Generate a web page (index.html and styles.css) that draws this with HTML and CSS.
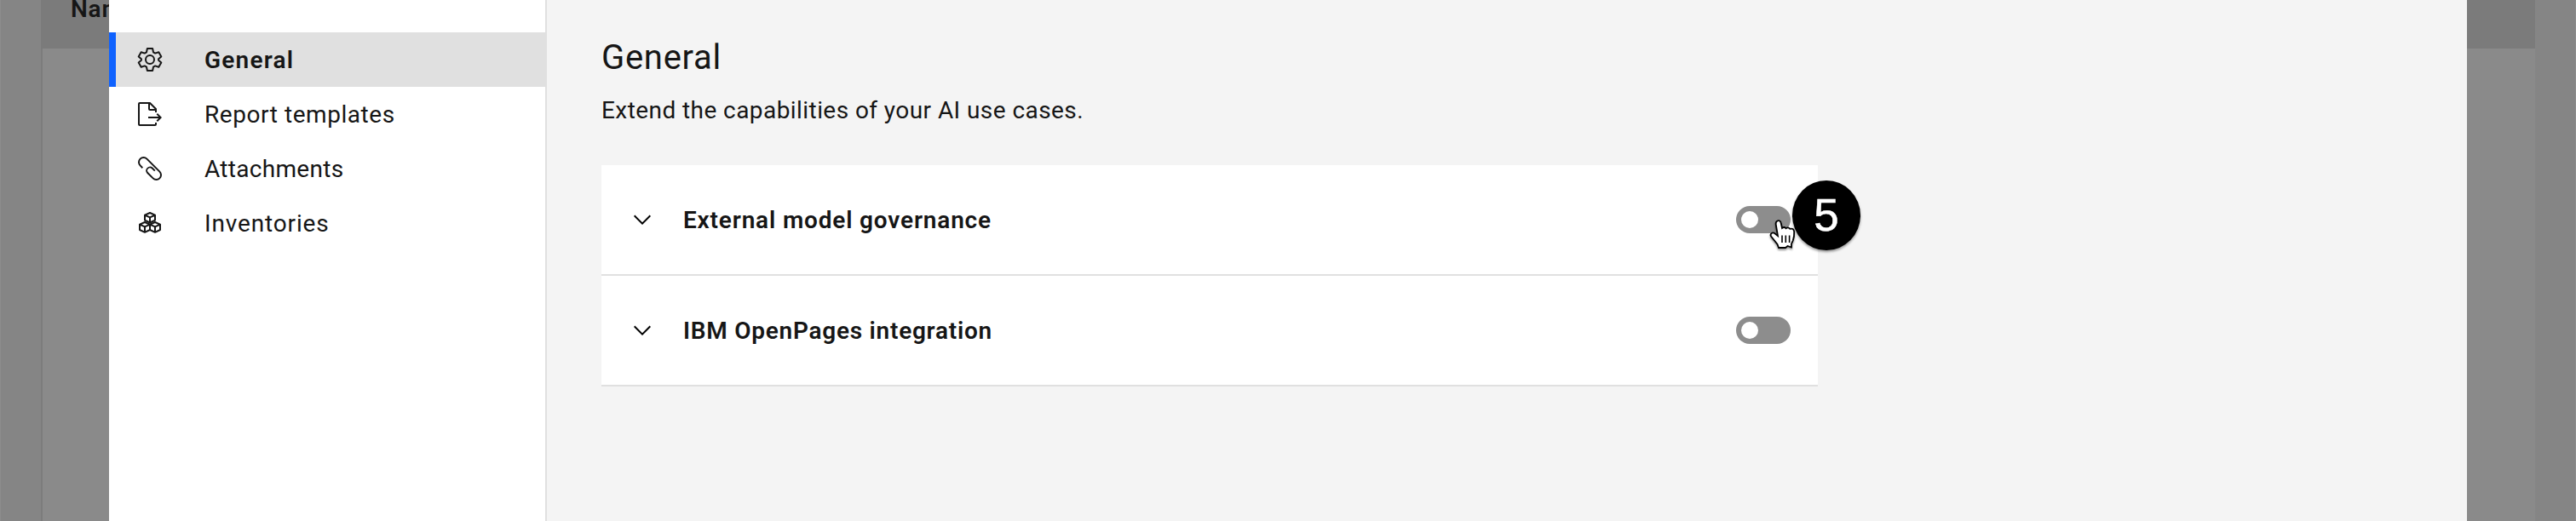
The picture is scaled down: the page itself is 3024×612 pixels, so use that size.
FILE: index.html
```html
<!DOCTYPE html>
<html lang="en">
<head>
<meta charset="utf-8">
<title>Settings</title>
<link rel="stylesheet" href="styles.css">
</head>
<body>
<div class="page">
  <div class="backdrop backdrop-left"><div class="table-head"><span class="th-label">Name</span></div><div class="table-body"></div></div>
  <div class="modal">
    <nav class="nav">
      <a class="nav-item active">
        <svg class="icon" viewBox="0 0 32 32" fill="none" stroke="currentColor" stroke-width="2" stroke-linejoin="round"><circle cx="16" cy="16" r="5"/><path d="M12.900 3h6.200l.9 4.300 2.200 1.300 4.100-1.400 3 5.200-3.200 2.800v1.600l3.200 2.800-3 5.200-4.100-1.400-2.200 1.300-.9 4.300h-6.200l-.9-4.300-2.200-1.300-4.100 1.400-3-5.200 3.200-2.800v-1.600l-3.200-2.800 3-5.200 4.100 1.400 2.200-1.300z"/></svg>
        <span class="t-general">General</span></a>
      <a class="nav-item">
        <svg class="icon" viewBox="0 0 32 32" fill="currentColor"><path d="M13 19h12.170l-2.580-2.590L24 15l5 5-5 5-1.410-1.410L25.170 21H13z" transform="translate(1 0)"/><path d="M22 27v1H4V4h10v6a2 2 0 0 0 2 2h6v2h2v-4a.9.9 0 0 0-.3-.7l-7-7A.9.9 0 0 0 16 2H4a2 2 0 0 0-2 2v24a2 2 0 0 0 2 2h18a2 2 0 0 0 2-2v-2h-2zM16 4.400 21.600 10H16z"/></svg>
        <span class="t-report">Report templates</span></a>
      <a class="nav-item">
        <svg class="icon" viewBox="0 0 32 32" fill="currentColor"><path d="M28.100 18.900 13.100 3.900a6.500 6.500 0 0 0-9.200 9.200l2.700 2.800L8 14.500l-2.700-2.800a4.500 4.500 0 0 1 6.400-6.400l15 15a4.500 4.500 0 0 1-6.400 6.400l-6.400-6.400a2.900 2.900 0 0 1 4.100-4.100l3.100 3.100 1.400-1.400-3.100-3.100a4.900 4.900 0 0 0-6.900 6.900l6.400 6.400a6.500 6.500 0 0 0 9.200-9.200z"/></svg>
        <span class="t-attach">Attachments</span></a>
      <a class="nav-item">
        <svg class="icon" viewBox="0 0 32 32" fill="none" stroke="currentColor" stroke-width="2" stroke-linejoin="round"><path d="M16 4l6 2.700v6L16 15.500l-6-2.800v-6zM10 6.700l6 2.700 6-2.700M16 9.400v6"/><path d="M10 15l6 2.700v6.300l-6 2.800-6-2.800v-6.300zM4 17.700l6 2.700 6-2.700M10 20.400v6.400M22 15l6 2.700v6.300l-6 2.800-6-2.800v-6.300zM16 17.700l6 2.700 6-2.700M22 20.400v6.400"/></svg>
        <span class="t-invent">Inventories</span></a>
    </nav>
    <main class="main">
      <h1 class="title">General</h1>
      <p class="subtitle">Extend the capabilities of your AI use cases.</p>
      <section class="panel">
        <div class="row">
          <svg class="chevron" viewBox="0 0 32 32"><path d="M16 22 6 12l1.400-1.400 8.600 8.600 8.600-8.600L26 12z"/></svg>
          <span class="row-label t-external">External model governance</span>
          <span class="toggle"><span class="knob"></span></span>
          <svg class="cursor" viewBox="0 0 36 42"><path d="M14.500 2.500C16.500 1.600 18.300 2.600 18.700 5L20 11Q22.500 9 24.500 11.200 27.200 9.200 29.200 11.800 33.600 10.600 34.200 15 34.500 20.500 32.800 25.500L31 29.500v4l-4.500-1.500-2.500 2H16L14.500 30 7 20.500C5.500 18.200 8.500 15 11.500 17.200L15 20 12.700 6.500Q12.300 3.600 14.500 2.500Z" fill="#fff" stroke="#000" stroke-width="1.800"/><path d="M20 19.500v8.500M24.300 19.500v8.500M28.600 19.500v8.500" stroke="#000" stroke-width="1.600"/></svg>
          <span class="badge">5</span>
        </div>
        <div class="row">
          <svg class="chevron" viewBox="0 0 32 32"><path d="M16 22 6 12l1.400-1.400 8.600 8.600 8.600-8.600L26 12z"/></svg>
          <span class="row-label t-ibm">IBM OpenPages integration</span>
          <span class="toggle"><span class="knob"></span></span>
        </div>
      </section>
    </main>
  </div>
  <div class="backdrop backdrop-right"><div class="table-head"></div><div class="table-body"></div></div>
</div>
</body>
</html>
```
FILE: styles.css
```css
* { box-sizing: border-box; }
body { margin: 0; font-family: Roboto, sans-serif; font-size: 28px; color: #161616; }
.page { display: flex; height: 612px; overflow: hidden; background: #858585; }
.backdrop { flex: none; display: flex; flex-direction: column; width: 128px; white-space: nowrap; overflow: hidden; }
.backdrop-left { padding-left: 47px; border-left: 1px solid #8c8c8c; }
.backdrop-right { padding-right: 47px; border-right: 1px solid #8c8c8c; }
.table-head { flex: none; height: 57px; background: #7b7b7b; overflow: hidden; }
.th-label { display: block; margin: -9px 0 0 35px; line-height: 40px; font-weight: 600; letter-spacing: .8px; }
.table-body { flex: 1; background: #8a8a8a; }
.backdrop-left .table-body { border-left: 2px solid #7c7c7c; }
.modal { display: flex; flex: 1; background: #f4f4f4; }
.nav { flex: none; width: 514px; padding-top: 38px; background: #fff; border-right: 2px solid #e0e0e0; }
.nav-item { display: flex; align-items: center; height: 64px; padding-left: 32px; gap: 48px; line-height: 36px; }
.nav-item span { padding-top: 2px; }
.nav-item.active { background: #e0e0e0; border-left: 8px solid #0f62fe; padding-left: 24px; font-weight: 600; }
.icon, .chevron { flex: none; width: 32px; height: 32px; }
.t-general { letter-spacing: 1.2px; }
.t-report { letter-spacing: .55px; }
.t-attach { letter-spacing: .3px; }
.t-invent { letter-spacing: .85px; }
.t-external { letter-spacing: .83px; }
.t-ibm { letter-spacing: .74px; }
.main { padding: 43px 0 0 64px; }
.title { margin: 0; font-size: 40px; line-height: 50px; font-weight: 400; letter-spacing: .7px; }
.subtitle { margin: 19px 0 0; line-height: 36px; letter-spacing: .43px; }
.panel { width: 1428px; margin-top: 46px; background: #fff; }
.row { position: relative; display: flex; align-items: center; height: 130px; padding: 0 32px; border-bottom: 2px solid #e0e0e0; }
.row-label { margin-left: 32px; padding-top: 2px; font-weight: 600; line-height: 36px; }
.toggle { display: flex; align-items: center; width: 64px; height: 32px; margin-left: auto; padding-left: 6px; border-radius: 16px; background: #8d8d8d; }
.knob { width: 20px; height: 20px; border-radius: 50%; background: #fff; }
.badge { position: absolute; left: 1398px; top: 18px; width: 80px; height: 82px; border-radius: 50%; background: #000; color: #fff; font: 400 53px/82px "Liberation Sans", sans-serif; -webkit-text-stroke: .5px #fff; text-align: center; box-shadow: 0 2px 3px rgba(0,0,0,.4); }
.cursor { position: absolute; left: 1366px; top: 63px; width: 36px; height: 42px; filter: drop-shadow(0 2px 1px rgba(0,0,0,.4)); }
```
